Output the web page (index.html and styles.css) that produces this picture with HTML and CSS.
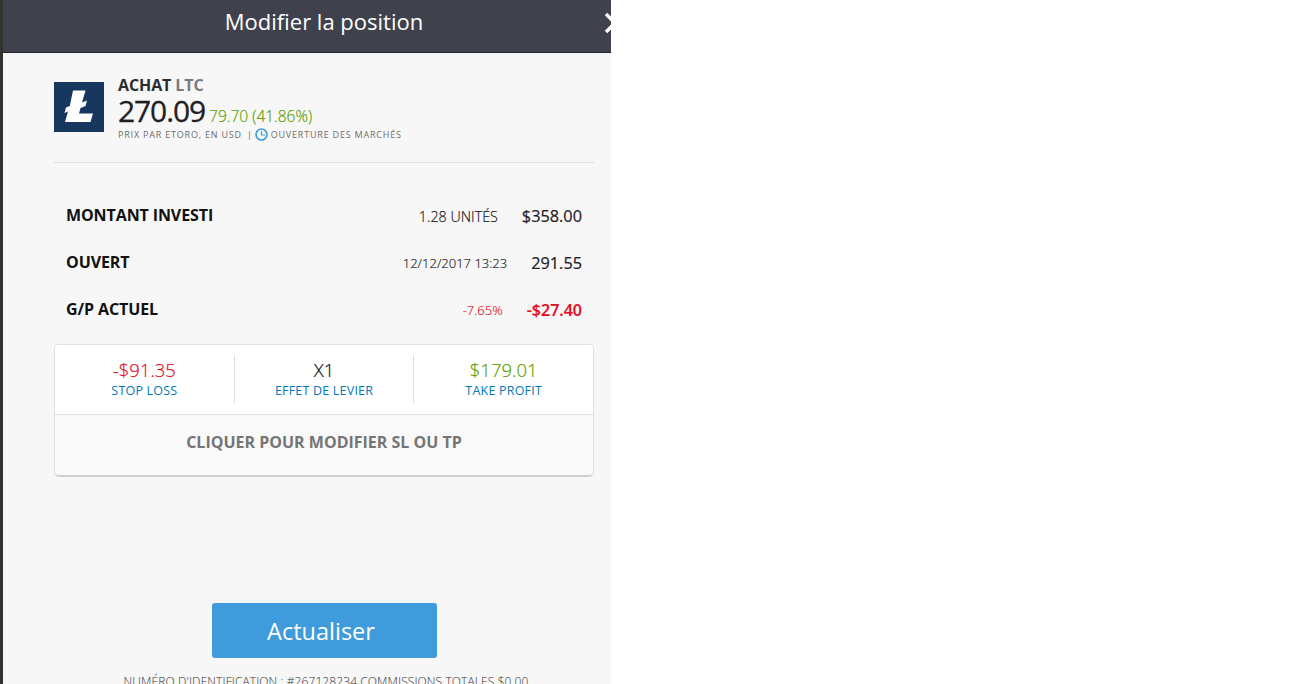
FILE: index.html
```html
<!DOCTYPE html>
<html lang="fr">
<head>
    <meta charset="UTF-8">
    <title>Modifier la position</title>
    <link rel="stylesheet" href="styles.css">
</head>
<body>
    <div class="edge"></div>
    <div class="panel">
        <header class="head">
            <h1>Modifier la position</h1>
            <svg class="close" width="22" height="22" viewBox="0 0 22 22">
                <path d="M2 2 L20 20 M20 2 L2 20" stroke="#fff" stroke-width="3.4" fill="none"/>
            </svg>
        </header>

        <section class="instrument">
            <svg class="logo" width="50" height="50" viewBox="0 0 50 50">
                <rect width="50" height="50" fill="#17375f"/>
                <path d="M19 8.5 H31.5 L28 20.5 L33 18.5 L31.5 24 L26.5 26 L25 31.5 H39 L36.5 40 H11 L14 29.5 L10.5 31 L12 25.5 L15.8 24 Z" fill="#fff"/>
            </svg>
            <div class="instrument-info">
                <div class="pair">ACHAT <span class="symbol">LTC</span></div>
                <div class="quote">
                    <span class="rate">270.09</span>
                    <span class="change">79.70 (41.86%)</span>
                </div>
                <div class="note">
                    <span>PRIX PAR ETORO, EN USD</span>
                    <span class="sep">|</span>
                    <svg class="clock" width="13" height="13" viewBox="0 0 13 13">
                        <circle cx="6.5" cy="6.5" r="5.5" fill="none" stroke="#3f9bdb" stroke-width="1.6"/>
                        <path d="M6.5 3 V7 H10" fill="none" stroke="#3f9bdb" stroke-width="1.2"/>
                    </svg>
                    <span>OUVERTURE DES MARCHÉS</span>
                </div>
            </div>
        </section>

        <section class="details">
            <div class="row">
                <span class="row-label">MONTANT INVESTI</span>
                <span class="row-sub units">1.28 UNITÉS</span>
                <span class="row-value">$358.00</span>
            </div>
            <div class="row">
                <span class="row-label">OUVERT</span>
                <span class="row-sub">12/12/2017 13:23</span>
                <span class="row-value">291.55</span>
            </div>
            <div class="row loss">
                <span class="row-label">G/P ACTUEL</span>
                <span class="row-sub">-7.65%</span>
                <span class="row-value">-$27.40</span>
            </div>
        </section>

        <section class="limits">
            <div class="limits-top">
                <div class="limit">
                    <div class="limit-value red">-$91.35</div>
                    <div class="limit-name">STOP LOSS</div>
                </div>
                <div class="limit">
                    <div class="limit-value">X1</div>
                    <div class="limit-name">EFFET DE LEVIER</div>
                </div>
                <div class="limit">
                    <div class="limit-value green">$179.01</div>
                    <div class="limit-name">TAKE PROFIT</div>
                </div>
            </div>
            <div class="limits-edit">CLIQUER POUR MODIFIER SL OU TP</div>
        </section>

        <div class="actions">
            <button class="update">Actualiser</button>
            <div class="footnote">NUMÉRO D'IDENTIFICATION : #267128234 COMMISSIONS TOTALES $0.00</div>
        </div>
    </div>
</body>
</html>
```

FILE: styles.css
```css
* {
    margin: 0;
    padding: 0;
    box-sizing: border-box;
}

html, body {
    height: 684px;
    overflow: hidden;
}

body {
    display: flex;
    background-color: #fff;
    font-family: "Open Sans", Arial, sans-serif;
    color: #1f2024;
}

.edge {
    width: 3px;
    background-color: #333;
}

.panel {
    width: 608px;
    height: 684px;
    background-color: #f7f7f7;
    overflow: hidden;
}

.head {
    position: relative;
    height: 53px;
    padding-left: 34px;
    background-color: #3f424d;
    border-bottom: 1px solid #23242a;
    text-align: center;
}

.head h1 {
    font-size: 22px;
    font-weight: 400;
    line-height: 43px;
    color: #fff;
}

.close {
    position: absolute;
    top: 12px;
    left: 601px;
}

.instrument {
    display: flex;
    align-items: flex-start;
    margin: 0 17px 0 51px;
    padding: 22px 0 22px;
    height: 110px;
    border-bottom: 1px solid #e0e0e0;
}

.logo {
    margin: 7px 14px 0 0;
}

.pair {
    font-size: 16px;
    font-weight: 700;
    letter-spacing: -0.1px;
    line-height: 20px;
    color: #2b2c30;
}

.symbol {
    color: #7b7b7b;
}

.quote {
    display: flex;
    align-items: baseline;
    gap: 4px;
    height: 31px;
    line-height: 31px;
}

.rate {
    font-size: 30px;
    letter-spacing: -1.1px;
    -webkit-text-stroke: 0.3px currentColor;
}

.change {
    font-size: 15.5px;
    font-weight: 300;
    color: #5f9e00;
    -webkit-text-stroke: 0.2px currentColor;
}

.note {
    display: flex;
    align-items: center;
    gap: 3px;
    margin-top: 1px;
    font-size: 9px;
    letter-spacing: 0.8px;
    line-height: 14px;
    height: 15px;
    color: #6d6d6d;
}

.sep {
    margin: 0 -1px 0 2px;
}

.details {
    margin: 28px 29px 0 63px;
}

.row {
    display: flex;
    align-items: center;
    height: 47px;
}

.row-label {
    flex: 1;
    font-size: 16px;
    font-weight: 700;
    letter-spacing: -0.1px;
    color: #111;
}

.row-sub {
    margin-right: 24px;
    padding-top: 3px;
    font-size: 13px;
    font-weight: 300;
    color: #111;
    -webkit-text-stroke: 0.15px currentColor;
}

.units {
    font-size: 14.3px;
}

.row-value {
    padding-top: 2px;
    font-size: 16.3px;
    -webkit-text-stroke: 0.2px currentColor;
}

.loss .row-sub {
    color: #e30d1c;
}

.loss .row-value {
    color: #e30d1c;
    font-size: 16px;
    font-weight: 600;
}

.limits {
    margin: 12px 17px 0 51px;
    height: 133px;
    border: 1px solid #e0e0e0;
    border-bottom: 2px solid #cfcfcf;
    border-radius: 5px;
    overflow: hidden;
}

.limits-top {
    display: flex;
    align-items: center;
    height: 70px;
    background-color: #fff;
    border-bottom: 1px solid #e0e0e0;
}

.limit {
    flex: 1;
    height: 49px;
    padding-top: 1px;
    text-align: center;
    border-right: 1px solid #e0e0e0;
}

.limit:last-child {
    border-right: 0;
}

.limit-value {
    font-size: 18.5px;
    font-weight: 300;
    line-height: 28px;
    color: #111;
    -webkit-text-stroke: 0.2px currentColor;
}

.limit-name {
    font-size: 12.5px;
    letter-spacing: 0.2px;
    line-height: 14px;
    color: #0079b8;
}

.limit-value.red {
    color: #e30d1c;
}

.limit-value.green {
    color: #5f9e00;
}

.limits-edit {
    height: 61px;
    padding-top: 16px;
    background-color: #f9f9f9;
    text-align: center;
    font-size: 16px;
    font-weight: 700;
    line-height: 22px;
    color: #757575;
}

.actions {
    margin-top: 126px;
    padding-left: 34px;
    text-align: center;
}

.update {
    display: block;
    width: 225px;
    height: 55px;
    margin: 0 auto;
    padding-right: 6px;
    border: 0;
    border-radius: 3px;
    background-color: #3f9bdb;
    color: #fff;
    font-family: inherit;
    font-size: 23.5px;
}

.footnote {
    margin-top: 16px;
    margin-left: 4px;
    font-size: 12px;
    letter-spacing: 0.1px;
    line-height: 16px;
    font-weight: 300;
    color: #333;
    white-space: nowrap;
}
```
